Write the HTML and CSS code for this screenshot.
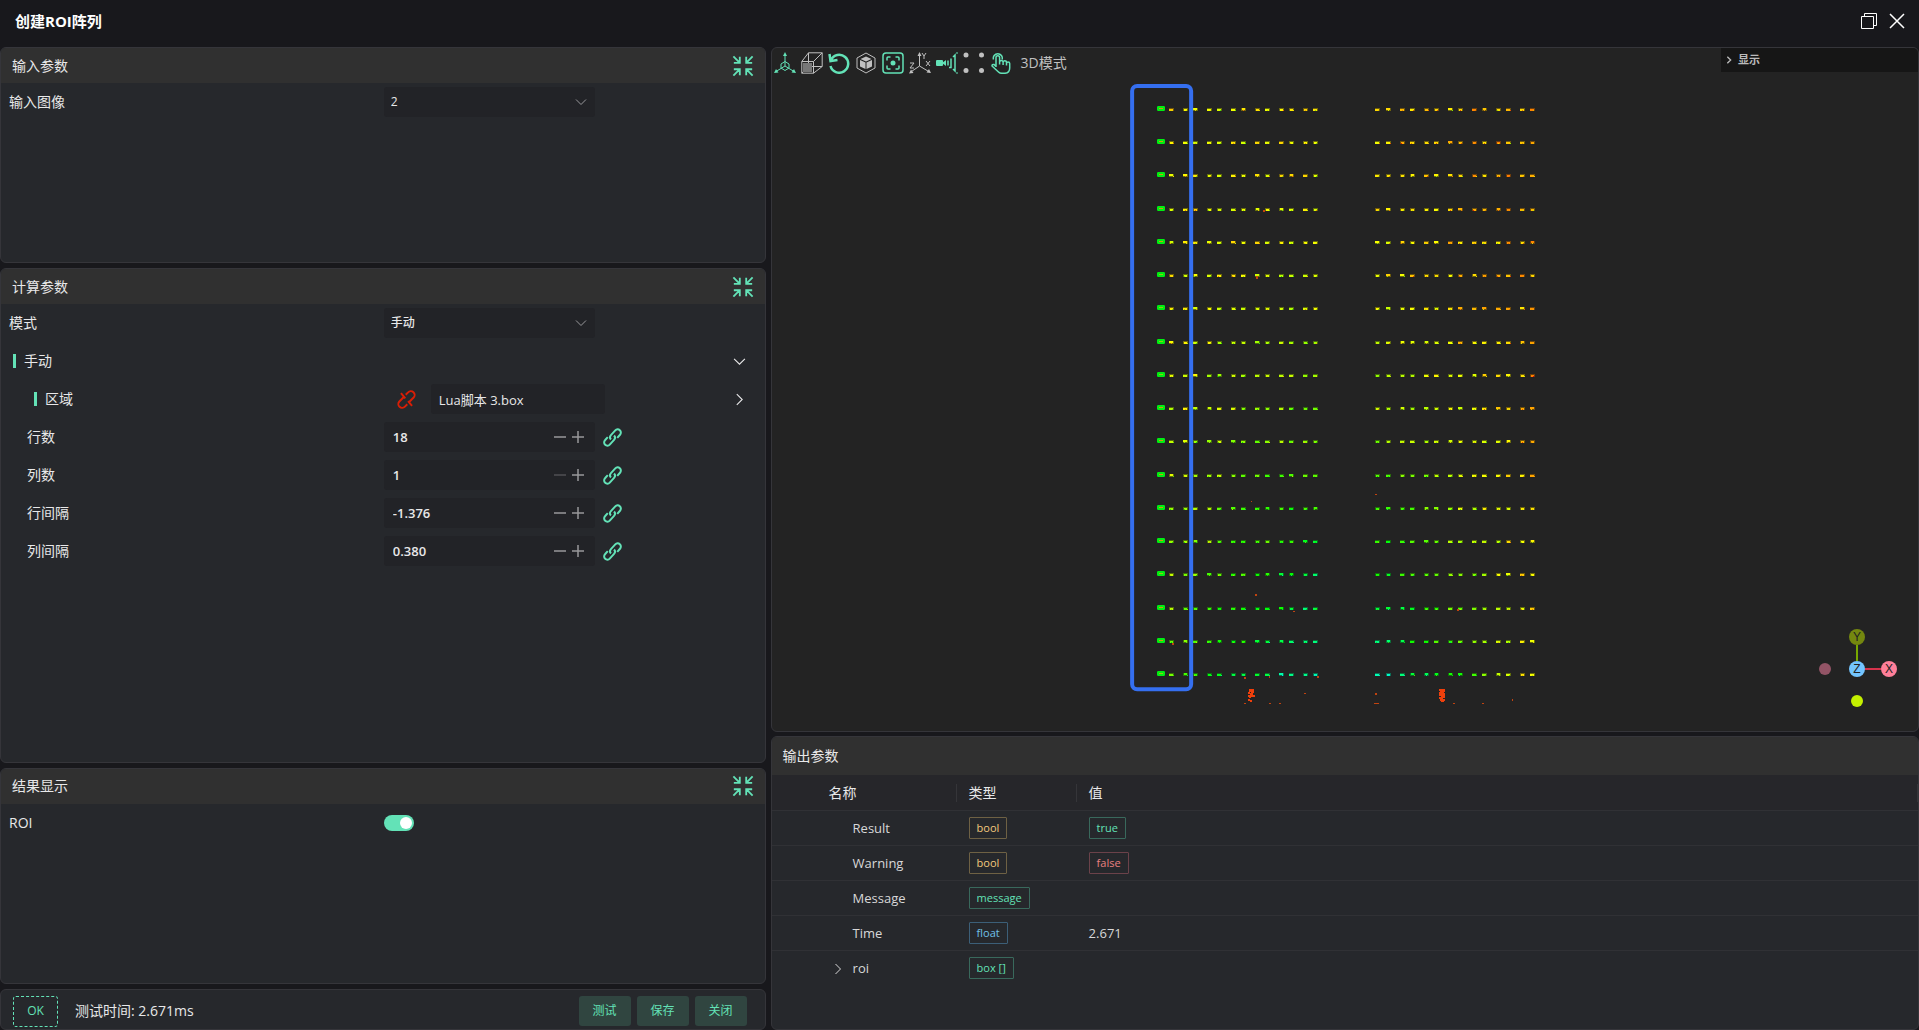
FILE: index.html
```
<!DOCTYPE html>
<html lang="zh-CN">
<head>
    <meta charset="UTF-8">
    <title>创建ROI阵列</title>
    <link rel="stylesheet" href="styles.css">
</head>
<body>

    <!-- Shared icons -->
    <svg class="sprite" aria-hidden="true">
        <symbol id="i-collapse" viewBox="0 0 24 24">
            <path d="M1.500 1.500l7 7M8.500 2v6.500H2M22.500 1.500l-7 7M15.500 2v6.500H22M1.500 22.500l7-7M8.500 22v-6.500H2M22.500 22.500l-7-7M15.500 22v-6.500H22"/>
        </symbol>
        <symbol id="i-down" viewBox="0 0 12 12"><path d="M1 3.500l5 5 5-5"/></symbol>
        <symbol id="i-right" viewBox="0 0 12 12"><path d="M3.500 1l5 5-5 5"/></symbol>
        <symbol id="i-minus" viewBox="0 0 12 12"><path d="M0 6h12"/></symbol>
        <symbol id="i-plus" viewBox="0 0 12 12"><path d="M0 6h12M6 0v12"/></symbol>
        <symbol id="i-link" viewBox="0 0 24 24">
            <path d="M10 14.500a4 4 0 0 1 0-5.500l5.500-6a4 4 0 0 1 6 5.500l-3.500 4"/>
            <path d="M14 9.500a4 4 0 0 1 0 5.500l-5.500 6a4 4 0 0 1-6-5.500l3.500-4"/>
        </symbol>
        <symbol id="i-unlink" viewBox="0 0 24 24">
            <path d="M11 6l3-3a4.500 4.500 0 0 1 7 6.500l-5 5M13 18l-3 3a4.500 4.500 0 0 1-7-6.500l5-5M5 4l5.500 6.500M14 14l5 6"/>
        </symbol>
    </svg>

    <!-- Title bar -->
    <header class="titlebar">
        <h1>创建ROI阵列</h1>
        <div class="window-buttons">
            <button type="button" aria-label="还原">
                <svg viewBox="0 0 16 16"><path d="M.5 3.500h12v12H.5zM3.500 3.500v-3h12v12h-3"/></svg>
            </button>
            <button type="button" aria-label="关闭窗口">
                <svg viewBox="0 0 16 16"><path d="M1 1l14 14M15 1L1 15"/></svg>
            </button>
        </div>
    </header>

    <main class="container">

        <!-- Left column: parameters -->
        <div class="params">
            <section class="panel">
                <div class="panel-head">
                    <h2>输入参数</h2>
                    <button type="button" class="collapse" aria-label="折叠输入参数"><svg><use href="#i-collapse"/></svg></button>
                </div>
                <div class="row">
                    <label for="image">输入图像</label>
                    <div class="control">
                        <div class="select">
                            <select id="image"><option>2</option></select>
                            <svg><use href="#i-down"/></svg>
                        </div>
                    </div>
                </div>
            </section>

            <section class="panel">
                <div class="panel-head">
                    <h2>计算参数</h2>
                    <button type="button" class="collapse" aria-label="折叠计算参数"><svg><use href="#i-collapse"/></svg></button>
                </div>
                <div class="row">
                    <label for="mode">模式</label>
                    <div class="control">
                        <div class="select">
                            <select id="mode"><option>手动</option></select>
                            <svg><use href="#i-down"/></svg>
                        </div>
                    </div>
                </div>
                <div class="row">
                    <span class="group-name">手动</span>
                    <div class="control">
                        <button type="button" class="expand" aria-label="收起手动"><svg><use href="#i-down"/></svg></button>
                    </div>
                </div>
                <div class="row nested">
                    <label class="group-name" for="region">区域</label>
                    <div class="control">
                        <button type="button" class="link broken" aria-label="取消关联"><svg><use href="#i-unlink"/></svg></button>
                        <input class="ref" id="region" type="text" value="Lua脚本 3.box">
                        <button type="button" class="expand" aria-label="展开区域"><svg><use href="#i-right"/></svg></button>
                    </div>
                </div>
                <div class="row indent">
                    <label for="rows">行数</label>
                    <div class="control">
                        <div class="number">
                            <input id="rows" type="text" value="18">
                            <button type="button" aria-label="减少"><svg><use href="#i-minus"/></svg></button>
                            <button type="button" aria-label="增加"><svg><use href="#i-plus"/></svg></button>
                        </div>
                        <button type="button" class="link" aria-label="关联行数"><svg><use href="#i-link"/></svg></button>
                    </div>
                </div>
                <div class="row indent">
                    <label for="cols">列数</label>
                    <div class="control">
                        <div class="number">
                            <input id="cols" type="text" value="1">
                            <button type="button" aria-label="减少" disabled><svg><use href="#i-minus"/></svg></button>
                            <button type="button" aria-label="增加"><svg><use href="#i-plus"/></svg></button>
                        </div>
                        <button type="button" class="link" aria-label="关联列数"><svg><use href="#i-link"/></svg></button>
                    </div>
                </div>
                <div class="row indent">
                    <label for="row-gap">行间隔</label>
                    <div class="control">
                        <div class="number">
                            <input id="row-gap" type="text" value="-1.376">
                            <button type="button" aria-label="减少"><svg><use href="#i-minus"/></svg></button>
                            <button type="button" aria-label="增加"><svg><use href="#i-plus"/></svg></button>
                        </div>
                        <button type="button" class="link" aria-label="关联行间隔"><svg><use href="#i-link"/></svg></button>
                    </div>
                </div>
                <div class="row indent">
                    <label for="col-gap">列间隔</label>
                    <div class="control">
                        <div class="number">
                            <input id="col-gap" type="text" value="0.380">
                            <button type="button" aria-label="减少"><svg><use href="#i-minus"/></svg></button>
                            <button type="button" aria-label="增加"><svg><use href="#i-plus"/></svg></button>
                        </div>
                        <button type="button" class="link" aria-label="关联列间隔"><svg><use href="#i-link"/></svg></button>
                    </div>
                </div>
            </section>

            <section class="panel">
                <div class="panel-head">
                    <h2>结果显示</h2>
                    <button type="button" class="collapse" aria-label="折叠结果显示"><svg><use href="#i-collapse"/></svg></button>
                </div>
                <div class="row">
                    <label for="roi">ROI</label>
                    <div class="control"><input class="switch" id="roi" type="checkbox" checked></div>
                </div>
            </section>

            <!-- Status and actions -->
            <footer class="panel actions">
                <button type="button" class="status">OK</button>
                <span class="time">测试时间: 2.671ms</span>
                <button type="button" class="btn">测试</button>
                <button type="button" class="btn">保存</button>
                <button type="button" class="btn">关闭</button>
            </footer>
        </div>

        <!-- Right column: viewer and outputs -->
        <div class="results">
            <section class="viewer">
                <div class="toolbar">
                    <button type="button" class="green" aria-label="坐标轴">
                        <svg viewBox="0 0 22 22"><path d="M11 2v12M11 14L2 19.500M11 14l9 5.500M11 9.500l4 2.500v4l-4 2.500L7 16v-4z"/><path class="fill" d="M11 0l2 4H9zM0 21l2-4 2.500 3.500zM22 21l-2-4-2.500 3.500z"/></svg>
                    </button>
                    <button type="button" aria-label="包围盒">
                        <svg viewBox="0 0 22 22"><path d="M.8 9.500h11.700v11.700H.8zM.8 9.500L7.500.8h13.700v13.700l-8.700 6.700M12.500 9.500L21.200.8M7.500.8v13.700h13.700M7.500 14.500L.8 21.200"/><path class="soft" d="M2 11h9v9H2z"/></svg>
                    </button>
                    <button type="button" class="green" aria-label="重置视角">
                        <svg class="bold" viewBox="0 0 22 22"><path d="M3 8a9 9 0 1 1-.5 6M1.500 2l1 7 7-1"/></svg>
                    </button>
                    <button type="button" aria-label="实体">
                        <svg viewBox="0 0 22 22"><path d="M11 1l9 5v10l-9 5-9-5V6z"/><path class="fill" d="M11 4.500l5.500 2.500L11 9.500 5.500 7zM5 8l5.500 2.500V17L5 14.500zM17 8l-5.500 2.500V17l5.500-2.500z"/></svg>
                    </button>
                    <button type="button" class="green" aria-label="居中">
                        <svg class="medium" viewBox="0 0 22 22"><rect x="1" y="1" width="20" height="20" rx="3"/><path d="M5 8.500V6q0-1 1-1h2.500M13.500 5H16q1 0 1 1v2.500M17 13.500V16q0 1-1 1h-2.500M8.500 17H6q-1 0-1-1v-2.500"/><circle class="fill" cx="11" cy="11" r="2.500"/></svg>
                    </button>
                    <button type="button" aria-label="XYZ 方向">
                        <svg viewBox="0 0 22 22"><path d="M10.500 2v12M10.500 14L1 20.500M10.500 14l10 6M13 1l2 3 2-3M15 4v3M17 9l4 5M21 9l-4 5M1 11h4l-4 5h4"/><path class="fill" d="M10.500 0l2 4h-4zM0 21.500l2-4 2.500 3.500zM22 21l-2-4-2.500 3.500z"/></svg>
                    </button>
                    <button type="button" class="green" aria-label="相机">
                        <svg viewBox="0 0 22 22"><rect class="fill" x="0" y="8" width="7" height="6" rx="1"/><path class="fill" d="M6 11l4-3v6z"/><path class="medium" d="M12 8.500v5M15 6.500v9h-2"/><path class="medium" d="M17 5l2-2v16l-2-2"/><path d="M20 1h2M20 21h2"/></svg>
                    </button>
                    <button type="button" aria-label="点大小">
                        <svg viewBox="0 0 22 22"><g class="fill"><circle cx="3" cy="3" r="2.500"/><circle cx="18.500" cy="3" r="2.500"/><circle cx="3" cy="18.500" r="2.500"/><circle cx="18.500" cy="18.500" r="2.500"/></g></svg>
                    </button>
                    <button type="button" class="green" aria-label="点选">
                        <svg class="pointer" viewBox="0 0 22 22"><path d="M6 15V5.500a1.800 1.800 0 0 1 3.600 0v7M9.600 10a1.800 1.800 0 0 1 3.500 0v3M13.100 10.500a1.700 1.700 0 0 1 3.400 0v3M16.500 11.500a1.600 1.600 0 0 1 3.200 0V16q0 5-5 5.300h-3q-2 0-3.500-1.500L2 14q0-2 2-1.500l2 2M3.500 7.500a4.500 4.500 0 1 1 8.600 0"/></svg>
                    </button>
                    <span>3D模式</span>
                </div>

                <svg class="scene" id="scene" viewBox="0 0 1146 683" role="img" aria-label="点云">
                    <g id="points"></g>
                    <rect class="selection" x="360" y="38" width="59" height="603" rx="5"/>
                </svg>

                <details class="display-menu">
                    <summary><svg><use href="#i-right"/></svg>显示</summary>
                </details>

                <svg class="gizmo" viewBox="0 0 80 80" role="img" aria-label="视角">
                    <path class="axis-y" d="M40 16v16"/>
                    <path class="axis-x" d="M48 40h16"/>
                    <circle class="neg-x" cx="8" cy="40" r="6"/>
                    <circle class="neg-y" cx="40" cy="72" r="6"/>
                    <circle class="pos-y" cx="40" cy="8" r="8"/>
                    <circle class="pos-x" cx="72" cy="40" r="8"/>
                    <circle class="pos-z" cx="40" cy="40" r="8"/>
                    <text x="40" y="12">Y</text>
                    <text x="72" y="44">X</text>
                    <text x="40" y="44">Z</text>
                </svg>
            </section>

            <section class="panel output">
                <div class="panel-head"><h2>输出参数</h2></div>
                <table>
                    <thead>
                        <tr><th class="col-name">名称</th><th class="col-type">类型</th><th>值</th></tr>
                    </thead>
                    <tbody>
                        <tr><td>Result</td><td><span class="tag yellow">bool</span></td><td><span class="tag">true</span></td></tr>
                        <tr><td>Warning</td><td><span class="tag yellow">bool</span></td><td><span class="tag red">false</span></td></tr>
                        <tr><td>Message</td><td><span class="tag">message</span></td><td></td></tr>
                        <tr><td>Time</td><td><span class="tag blue">float</span></td><td>2.671</td></tr>
                        <tr><td class="tree"><button type="button" aria-label="展开 roi"><svg><use href="#i-right"/></svg></button>roi</td><td><span class="tag">box []</span></td><td></td></tr>
                    </tbody>
                </table>
            </section>
        </div>
    </main>

    <script src="scene.js"></script>
</body>
</html>
```
FILE: styles.css
```
/* === Global Styles === */
* {
    box-sizing: border-box;
}

body {
    margin: 0;
    height: 100vh;
    display: flex;
    flex-direction: column;
    background: #18181c;
    color: #e8e8e9;
    font-family: "Open Sans", "Noto Sans CJK SC", sans-serif;
    font-size: 14px;
    line-height: 20px;
    overflow: hidden;
}

h1, h2 {
    margin: 0;
    font-size: 14px;
}

h2 {
    font-weight: 400;
}

button, input, select {
    font: inherit;
    color: inherit;
    background: none;
    border: none;
    padding: 0;
    margin: 0;
    outline: none;
}

button {
    display: flex;
    align-items: center;
    justify-content: center;
    cursor: pointer;
}

svg {
    fill: none;
    stroke: currentColor;
    flex: none;
}

.sprite {
    display: none;
}

/* === Title bar === */
.titlebar {
    display: flex;
    align-items: center;
    justify-content: space-between;
    height: 47px;
    padding: 0 14px 5px 15px;
    color: #fff;
}

.titlebar h1 {
    font-size: 15px;
}

.window-buttons {
    display: flex;
    gap: 12px;
}

.window-buttons svg {
    width: 16px;
    height: 16px;
}

.window-buttons button:last-child svg {
    stroke-width: 1.5;
}

/* === Main layout === */
.container {
    flex: 1;
    min-height: 0;
    display: grid;
    grid-template-columns: 2fr 3fr;
    gap: 5px;
}

.params {
    display: grid;
    grid-template-rows: 7fr 16fr 7fr 41px;
    gap: 5px;
    min-height: 0;
}

.results {
    display: grid;
    grid-template-rows: 7fr 3fr;
    gap: 4px;
    min-height: 0;
}

.panel {
    background: #26282c;
    border: 1px solid #35353a;
    border-radius: 6px;
    overflow: hidden;
    min-height: 0;
}

.panel-head {
    display: flex;
    align-items: center;
    justify-content: space-between;
    height: 35px;
    padding: 0 11px;
    background: #303030;
}

.collapse {
    color: #63e2b7;
}

.collapse svg {
    width: 22px;
    height: 22px;
    stroke-width: 2;
}

/* === Parameter rows === */
.row {
    display: grid;
    grid-template-columns: 1fr 1fr;
    align-items: center;
    height: 38px;
}

.row label {
    padding-left: 8px;
}

.row.indent label {
    padding-left: 26px;
}

.row .group-name {
    margin-left: 12px;
    padding-left: 8px;
    line-height: 14px;
    border-left: 3px solid #63e2b7;
}

.row.nested .group-name {
    margin-left: 33px;
}

.control {
    display: flex;
    align-items: center;
    padding-left: 1px;
}

.select {
    display: grid;
    width: 211px;
    align-items: center;
    background: #222327;
    border-radius: 3px;
}

.select select,
.select svg {
    grid-area: 1 / 1;
}

.select select {
    appearance: none;
    height: 30px;
    padding: 0 30px 0 7px;
    font-size: 12px;
    font-weight: 500;
}

.select svg {
    width: 12px;
    height: 12px;
    justify-self: end;
    margin-right: 8px;
    color: #98989b;
    pointer-events: none;
}

.expand {
    margin-left: auto;
    margin-right: 19px;
}

.expand svg {
    width: 13px;
    height: 13px;
}

.number {
    display: flex;
    align-items: center;
    gap: 6px;
    width: 211px;
    height: 30px;
    padding: 0 11px 0 9px;
    background: #222327;
    border-radius: 3px;
}

.number input {
    flex: 1;
    min-width: 0;
    font-size: 13px;
    font-weight: 600;
}

.number button {
    color: #98989b;
}

.number button:disabled {
    color: #505155;
}

.number svg {
    width: 12px;
    height: 12px;
    stroke-width: 1.5;
}

.link {
    margin-left: 8px;
    color: #63e2b7;
}

.link svg {
    width: 19px;
    height: 19px;
    stroke-width: 2.5;
}

.link.broken {
    margin-left: 13px;
    margin-right: 15px;
    color: #d81e06;
}

.ref {
    width: 174px;
    height: 30px;
    padding: 0 8px;
    font-size: 13px;
    background: #222327;
    border-radius: 3px;
}

.switch {
    appearance: none;
    display: flex;
    width: 30px;
    height: 16px;
    padding: 2px;
    border-radius: 8px;
    background: #55565a;
}

.switch::before {
    content: "";
    width: 12px;
    height: 12px;
    border-radius: 50%;
    background: #fff;
}

.switch:checked {
    justify-content: flex-end;
    background: #63e2b7;
}

/* === Bottom actions === */
.actions {
    display: flex;
    align-items: center;
    gap: 6px;
    padding: 3px 18px 0 12px;
}

.status {
    width: 45px;
    height: 31px;
    border: 1px dashed #63e2b7;
    border-radius: 3px;
    color: #63e2b7;
    font-size: 12px;
}

.time {
    flex: 1;
    padding-left: 11px;
}

.btn {
    width: 52px;
    height: 30px;
    border-radius: 3px;
    background: #304540;
    color: #63e2b7;
    font-size: 12px;
}

/* === 3D viewer === */
.viewer {
    position: relative;
    min-height: 0;
    display: flex;
    background: #232323;
    border: 1px solid #35353a;
    border-radius: 6px;
    overflow: hidden;
}

.toolbar {
    position: absolute;
    top: 4px;
    left: 2px;
    display: flex;
    align-items: center;
    gap: 5px;
    color: #c0c0c0;
}

.toolbar svg {
    width: 22px;
    height: 22px;
    stroke-width: 1;
}

.toolbar span {
    padding-left: 4px;
}

.toolbar .green {
    color: #63e2b7;
}

.toolbar .bold {
    stroke-width: 2.5;
}

.toolbar .medium,
.toolbar .pointer {
    stroke-width: 1.5;
}

.fill {
    fill: currentColor;
    stroke: none;
}

.soft {
    fill: #777;
    stroke: none;
}

.scene {
    flex: 1;
    min-width: 0;
    height: 100%;
    stroke: none;
    shape-rendering: crispEdges;
}

.selection {
    stroke: #356ff0;
    stroke-width: 4;
    shape-rendering: auto;
}

.display-menu {
    position: absolute;
    top: 0;
    right: 0;
    width: 197px;
    background: #161616;
    color: #bbb;
    font-size: 11px;
    font-weight: 700;
}

.display-menu summary {
    display: flex;
    align-items: center;
    gap: 5px;
    height: 24px;
    padding-left: 4px;
    list-style: none;
    cursor: pointer;
}

.display-menu svg {
    width: 8px;
    height: 8px;
    stroke-width: 2;
}

.gizmo {
    position: absolute;
    right: 21px;
    bottom: 22px;
    width: 80px;
    height: 80px;
    stroke: none;
    overflow: visible;
}

.gizmo text {
    fill: #222;
    font-family: "Liberation Sans", sans-serif;
    font-size: 12px;
    text-anchor: middle;
}

.axis-x, .axis-y { stroke-width: 2; }
.axis-x { stroke: #d6334c; }
.axis-y { stroke: #78a800; }
.pos-x { fill: #ff7f99; }
.pos-y { fill: #74870f; }
.pos-z { fill: #73c5ff; }
.neg-x { fill: #935466; }
.neg-y { fill: #c4f000; }

/* === Output table === */
.output .panel-head {
    height: 38px;
}

table {
    width: 100%;
    table-layout: fixed;
    border-collapse: collapse;
}

th, td {
    height: 35px;
    padding: 0 12px;
    border-bottom: 1px solid #303135;
    text-align: left;
    font-weight: 400;
}

th {
    background: #26262a;
    background-image: linear-gradient(#353539, #353539);
    background-size: 1px 18px;
    background-position: right center;
    background-repeat: no-repeat;
}

td {
    font-size: 13px;
    color: #d8d8d9;
}

tbody tr:last-child td {
    border-bottom: none;
}

.col-name {
    width: 185px;
    padding-left: 57px;
}

.col-type {
    width: 120px;
}

td:first-child {
    padding-left: 81px;
}

td.tree {
    padding-left: 60px;
}

.tree button {
    display: inline-block;
    width: 21px;
    text-align: left;
    line-height: 12px;
    vertical-align: middle;
}

.tree svg {
    width: 12px;
    height: 12px;
}

.tag {
    display: inline-block;
    padding: 0 7px;
    border: 1px solid #39695c;
    border-radius: 1px;
    color: #63e2b7;
    font-size: 11px;
    line-height: 20px;
    vertical-align: middle;
}

.tag.yellow {
    border-color: #6e6144;
    color: #f2c97d;
}

.tag.red {
    border-color: #6b424a;
    color: #e88080;
}

.tag.blue {
    border-color: #3c5f78;
    color: #70c0e8;
}
```
FILE: scene.js
```
// === Point cloud layout ===
const LEFT_COLS = [399, 413, 423, 437, 447, 461, 471, 485, 495, 509, 519, 533, 543];
const RIGHT_COLS = [605, 616, 630, 640, 654, 664, 678, 688, 702, 712, 726, 736, 750, 760];
const ROWS = 18;
const TOP = 61;
const STEP = 33.24;

const points = document.getElementById('points');
let seed = 7;

// Repeatable noise, so that the cloud looks the same on each load
function random() {
    seed = (seed * 16807) % 2147483647;
    return seed / 2147483647;
}

function addRect(x, y, w, h, fill) {
    const rect = document.createElementNS('http://www.w3.org/2000/svg', 'rect');
    rect.setAttribute('x', x);
    rect.setAttribute('y', y);
    rect.setAttribute('width', w);
    rect.setAttribute('height', h);
    rect.setAttribute('fill', fill);
    points.appendChild(rect);
}

// One part: a dim edge, a bright core and a speck of another height
function addPart(x, y, hue) {
    const h = hue + (random() - 0.5) * 24;
    const shift = random() > 0.5 ? 1 : 0;
    addRect(x - 2, y - 1, 5, 3, `hsl(${h}, 80%, 24%)`);
    addRect(x - 1 - shift, y - (random() > 0.8 ? 1 : 0), 3 + shift, 2, `hsl(${h}, 100%, 50%)`);
    addRect(x + Math.round(random() * 3) - 1, y + 1, 1, 1, `hsl(${h + (random() - 0.5) * 70}, 100%, 45%)`);
}

// Green box of one ROI in the array
function addRoi(x, y) {
    addRect(x, y, 8, 5, '#0aa814');
    addRect(x + 1, y, 6, 5, '#00ee12');
    addRect(x, y + 1, 8, 3, '#00ee12');
    addRect(x + 2, y + 2, 4, 1, random() > 0.5 ? '#c8a010' : '#8cd010');
}

for (let i = 0; i < ROWS; i++) {
    const y = Math.round(TOP + i * STEP);
    const low = Math.pow(i / (ROWS - 1), 2);

    LEFT_COLS.forEach((x, c) => addPart(x, y, 58 + low * (35 + 75 * c / 12)));
    RIGHT_COLS.forEach((x, c) => addPart(x, y, 52 - 14 * c / 13 + low * (110 - 90 * c / 13)));
    addRoi(385, y - 3);
}

// === Stray points: x, y, width, height ===
const STRAYS = [
    [483, 546, 2, 2], [479, 453, 1, 1], [603, 446, 2, 1], [521, 563, 2, 1],
    [400, 595, 2, 2], [472, 629, 2, 2], [497, 628, 1, 2], [545, 628, 2, 2],
    [685, 561, 2, 2], [532, 645, 2, 1], [603, 645, 2, 2], [602, 655, 5, 1],
    [472, 655, 2, 1], [497, 655, 2, 1], [507, 655, 2, 1], [681, 655, 2, 1],
    [710, 655, 2, 1], [740, 651, 1, 2], [484, 228, 2, 3], [491, 162, 2, 2]
];
STRAYS.forEach(([x, y, w, h]) => addRect(x, y, w, h, '#c0430f'));

// Two dense clusters below the grid
[[476, 641, 16], [667, 641, 30]].forEach(([x, y, n]) => {
    addRect(x + 1, y, 5, 3, '#f23c08');
    addRect(x + 2, y + 4, 3, 3, '#e8430c');
    for (let k = 0; k < n; k++) {
        addRect(x + Math.floor(random() * 6), y + Math.floor(random() * 12), 2, 2, '#ee400c');
    }
});
```
